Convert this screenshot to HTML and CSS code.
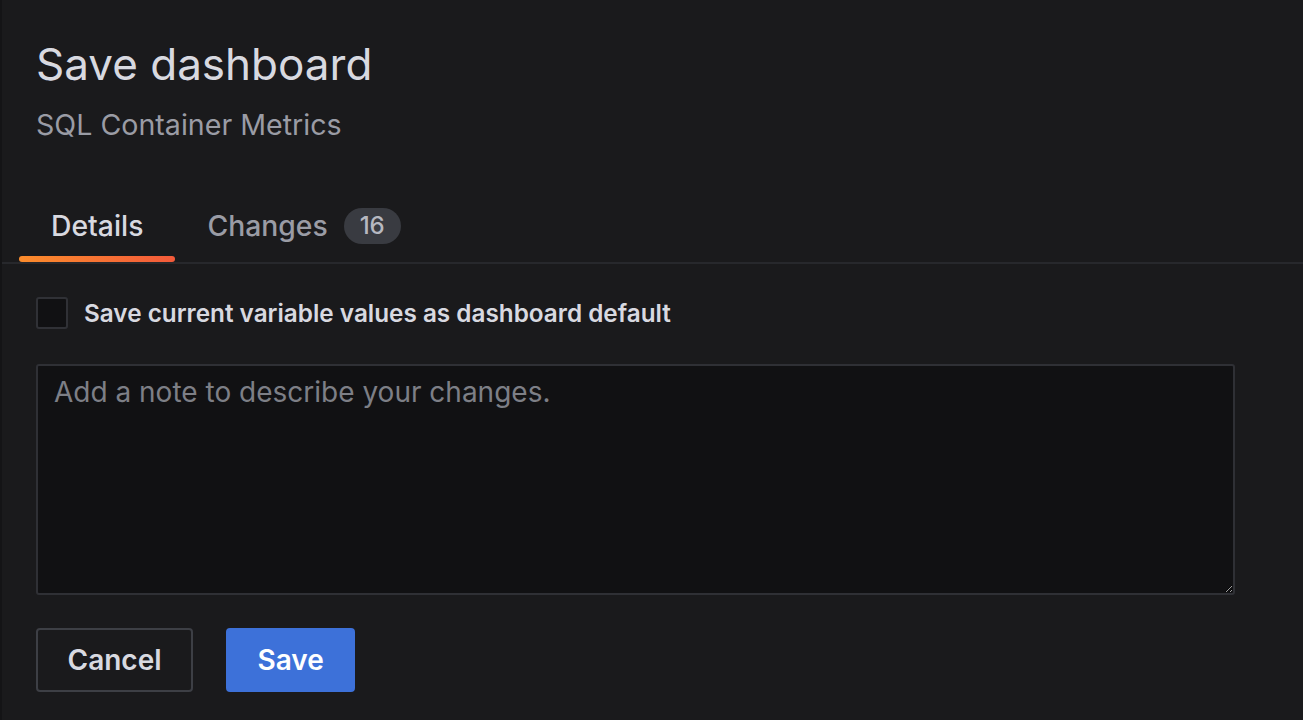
FILE: index.html
```html
<!DOCTYPE html>
<html>
<head>
<meta charset="utf-8">
<link rel="stylesheet" href="styles.css">
</head>
<body>
<div class="drawer">
  <header class="head">
    <h1 class="title">Save dashboard</h1>
    <div class="subtitle">SQL Container Metrics</div>
  </header>
  <nav class="tabs">
    <div class="tab active">Details</div>
    <div class="tab">Changes <span class="badge">16</span></div>
  </nav>
  <div class="body">
    <label class="check">
      <span class="box"></span>
      <span class="check-label">Save current variable values as dashboard default</span>
    </label>
    <div class="note">
      <textarea class="textarea" placeholder="Add a note to describe your changes."></textarea>
    </div>
    <div class="actions">
      <button class="btn btn-secondary">Cancel</button>
      <button class="btn btn-primary">Save</button>
    </div>
  </div>
</div>
</body>
</html>
```
FILE: styles.css
```css
html, body {
  margin: 0;
  padding: 0;
  background: #1a1a1c;
}
body {
  width: 1303px;
  height: 720px;
  overflow: hidden;
  font-family: Inter, "Noto Sans", sans-serif;
  color: #ccccdc;
}
.drawer {
  height: 720px;
  box-sizing: border-box;
  border-left: 2px solid #141416;
}
.head {
  padding: 36px 0 0 34px;
}
.title {
  margin: 0;
  font-size: 44px;
  font-weight: 400;
  line-height: 56px;
  color: #d8d9e0;
  letter-spacing: 0;
}
.subtitle {
  margin-top: 13px;
  font-size: 28.6px;
  line-height: 40px;
  color: #9a9ca5;
}
.tabs {
  display: flex;
  margin-top: 55px;
  border-bottom: 2px solid #27282c;
  height: 64px;
  box-sizing: border-box;
}
.tab {
  position: relative;
  display: flex;
  align-items: center;
  gap: 16px;
  padding: 0 32px 11px;
  font-size: 28.3px;
  font-weight: 500;
  color: #9a9ca5;
}
.tab:first-child {
  margin-left: 17px;
}
.tab.active {
  color: #d8d9e0;
}
.tab.active::after {
  content: "";
  position: absolute;
  left: 0;
  right: 0;
  bottom: 0;
  height: 6px;
  border-radius: 3px;
  background: linear-gradient(90deg, #fb8c2c, #f35a3a);
}
.badge {
  display: inline-flex;
  align-items: center;
  justify-content: center;
  height: 36px;
  padding: 0 16px;
  border-radius: 18px;
  background: #393b41;
  color: #b6b8c0;
  font-size: 24px;
  font-weight: 500;
}
.body {
  padding: 33px 0 0 34px;
}
.check {
  display: flex;
  align-items: center;
  gap: 16px;
  height: 32px;
}
.box {
  width: 28px;
  height: 28px;
  border: 2px solid #303136;
  border-radius: 3px;
  background: #111113;
}
.check-label {
  font-size: 24.3px;
  font-weight: 600;
  color: #d8d9e0;
}
.note {
  margin-top: 35px;
  width: 1199px;
}
.textarea {
  display: block;
  width: 1199px;
  height: 231px;
  box-sizing: border-box;
  background: #111113;
  border: 2px solid #2f3035;
  border-radius: 3px;
  padding: 8px 16px;
  font-family: Inter, "Noto Sans", sans-serif;
  font-size: 28px;
  line-height: 36px;
  color: #d8d9e0;
  resize: vertical;
  outline: none;
}
.textarea::placeholder {
  color: #7d7f86;
}
.actions {
  display: flex;
  gap: 33px;
  margin-top: 33px;
}
.btn {
  height: 64px;
  padding: 0 29.5px;
  border-radius: 4px;
  font-family: Inter, "Noto Sans", sans-serif;
  font-size: 28px;
  font-weight: 600;
}
.btn-secondary {
  background: transparent;
  border: 2px solid #3d3f45;
  color: #d8d9e0;
}
.btn-primary {
  background: #3d71d9;
  border: 2px solid #3d71d9;
  color: #ffffff;
}
```
